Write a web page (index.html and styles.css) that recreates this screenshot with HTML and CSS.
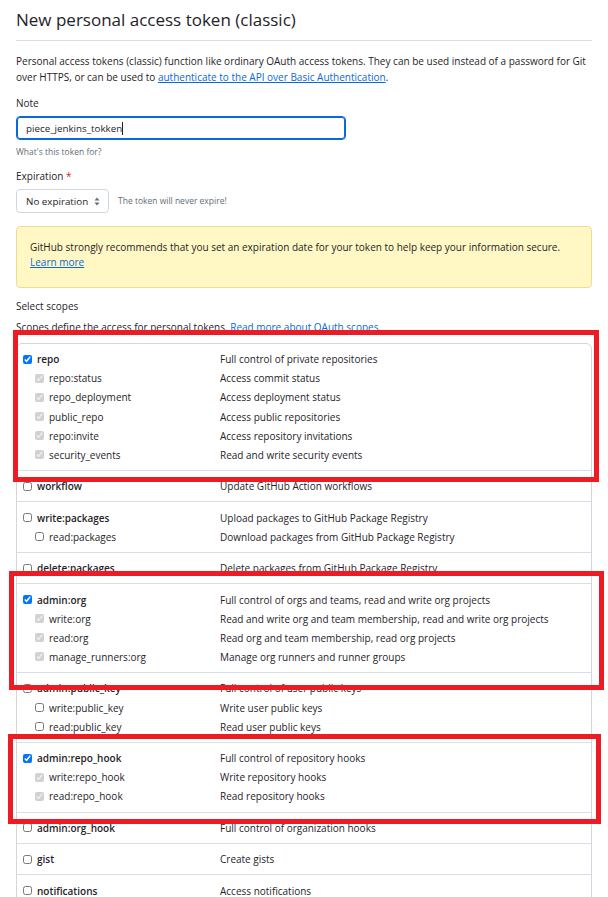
FILE: index.html
```html
<!DOCTYPE html>
<html lang="en">

<head>
    <meta charset="UTF-8">
    <meta name="viewport" content="width=device-width, initial-scale=1.0">
    <title>New personal access token (classic)</title>
    <link rel="stylesheet" href="styles.css">
</head>

<body>

    <div class="page">
        <h2 class="title">New personal access token (classic)</h2>
        <p class="intro">Personal access tokens (classic) function like ordinary OAuth access tokens. They can be used instead of a password for Git<br>over HTTPS, or can be used to <a href="#">authenticate to the API over Basic Authentication</a>.</p>

        <label class="field-label">Note</label>
        <div class="text-input">piece_jenkins_tokken<span class="caret"></span></div>
        <p class="hint">What's this token for?</p>

        <label class="field-label">Expiration <span class="required">*</span></label>
        <div class="select-row">
            <div class="select">
                No expiration
                <svg class="select-arrows" width="6" height="9" viewBox="0 0 6 9">
                    <path d="M3 0.5 L5.5 3.5 H0.5 Z M3 8.5 L5.5 5.5 H0.5 Z" fill="#656d76"/>
                </svg>
            </div>
            <span class="hint inline">The token will never expire!</span>
        </div>

        <div class="flash">
            GitHub strongly recommends that you set an expiration date for your token to help keep your information secure.<br>
            <a href="#">Learn more</a>
        </div>

        <label class="field-label">Select scopes</label>
        <p class="scopes-note">Scopes define the access for personal tokens. <a href="#">Read more about OAuth scopes.</a></p>

        <div class="scopes">
            <div class="scope-group">
                <div class="scope-row top"><span class="scope-name"><input type="checkbox" checked>repo</span><span>Full control of private repositories</span></div>
                <div class="scope-row sub"><span class="scope-name"><input type="checkbox" checked disabled>repo:status</span><span>Access commit status</span></div>
                <div class="scope-row sub"><span class="scope-name"><input type="checkbox" checked disabled>repo_deployment</span><span>Access deployment status</span></div>
                <div class="scope-row sub"><span class="scope-name"><input type="checkbox" checked disabled>public_repo</span><span>Access public repositories</span></div>
                <div class="scope-row sub"><span class="scope-name"><input type="checkbox" checked disabled>repo:invite</span><span>Access repository invitations</span></div>
                <div class="scope-row sub"><span class="scope-name"><input type="checkbox" checked disabled>security_events</span><span>Read and write security events</span></div>
            </div>
            <div class="scope-group">
                <div class="scope-row top"><span class="scope-name"><input type="checkbox">workflow</span><span>Update GitHub Action workflows</span></div>
            </div>
            <div class="scope-group">
                <div class="scope-row top"><span class="scope-name"><input type="checkbox">write:packages</span><span>Upload packages to GitHub Package Registry</span></div>
                <div class="scope-row sub"><span class="scope-name"><input type="checkbox">read:packages</span><span>Download packages from GitHub Package Registry</span></div>
            </div>
            <div class="scope-group">
                <div class="scope-row top"><span class="scope-name"><input type="checkbox">delete:packages</span><span>Delete packages from GitHub Package Registry</span></div>
            </div>
            <div class="scope-group">
                <div class="scope-row top"><span class="scope-name"><input type="checkbox" checked>admin:org</span><span>Full control of orgs and teams, read and write org projects</span></div>
                <div class="scope-row sub"><span class="scope-name"><input type="checkbox" checked disabled>write:org</span><span>Read and write org and team membership, read and write org projects</span></div>
                <div class="scope-row sub"><span class="scope-name"><input type="checkbox" checked disabled>read:org</span><span>Read org and team membership, read org projects</span></div>
                <div class="scope-row sub"><span class="scope-name"><input type="checkbox" checked disabled>manage_runners:org</span><span>Manage org runners and runner groups</span></div>
            </div>
            <div class="scope-group">
                <div class="scope-row top"><span class="scope-name"><input type="checkbox">admin:public_key</span><span>Full control of user public keys</span></div>
                <div class="scope-row sub"><span class="scope-name"><input type="checkbox">write:public_key</span><span>Write user public keys</span></div>
                <div class="scope-row sub"><span class="scope-name"><input type="checkbox">read:public_key</span><span>Read user public keys</span></div>
            </div>
            <div class="scope-group">
                <div class="scope-row top"><span class="scope-name"><input type="checkbox" checked>admin:repo_hook</span><span>Full control of repository hooks</span></div>
                <div class="scope-row sub"><span class="scope-name"><input type="checkbox" checked disabled>write:repo_hook</span><span>Write repository hooks</span></div>
                <div class="scope-row sub"><span class="scope-name"><input type="checkbox" checked disabled>read:repo_hook</span><span>Read repository hooks</span></div>
            </div>
            <div class="scope-group">
                <div class="scope-row top"><span class="scope-name"><input type="checkbox">admin:org_hook</span><span>Full control of organization hooks</span></div>
            </div>
            <div class="scope-group">
                <div class="scope-row top"><span class="scope-name"><input type="checkbox">gist</span><span>Create gists</span></div>
            </div>
            <div class="scope-group">
                <div class="scope-row top"><span class="scope-name"><input type="checkbox">notifications</span><span>Access notifications</span></div>
            </div>
        </div>

        <!-- red annotation boxes drawn over the screenshot -->
        <div class="mark mark-repo"></div>
        <div class="mark mark-org"></div>
        <div class="mark mark-hook"></div>
    </div>

</body>

</html>
```

FILE: styles.css
```css
body {
    margin: 0;
    font-family: "Open Sans", "Noto Sans", sans-serif;
    font-size: 10px;
    color: #1f2328;
    background-color: white;
    overflow: hidden;
}

a {
    color: #0969da;
    text-decoration: underline;
}

.page {
    position: relative;
    padding: 8px 16px 0;
}

.title {
    margin: 0;
    font-size: 17px;
    font-weight: 400;
    line-height: 24px;
    padding-bottom: 8px;
    border-bottom: 1px solid #d8dee4;
}

.intro {
    margin: 12px 0 0;
    line-height: 16px;
}

.field-label {
    display: block;
    margin-top: 10px;
    font-weight: 500;
    line-height: 16px;
}

.required {
    color: #cf222e;
}

.text-input {
    display: flex;
    align-items: center;
    box-sizing: border-box;
    width: 330px;
    height: 24px;
    margin-top: 5px;
    padding: 0 9px;
    font-size: 9.8px;
    border: 1px solid #0969da;
    box-shadow: inset 0 0 0 1px #0969da;
    border-radius: 4px;
}

.caret {
    display: inline-block;
    width: 0;
    height: 13px;
    border-left: 1px solid #1f2328;
}

.hint {
    margin: 6px 0 0;
    font-size: 8.5px;
    line-height: 12px;
    color: #656d76;
}

.hint.inline {
    margin: 0;
}

.select-row {
    display: flex;
    align-items: center;
    gap: 9px;
    margin-top: 5px;
}

.select {
    display: flex;
    align-items: center;
    justify-content: space-between;
    box-sizing: border-box;
    width: 93px;
    height: 24px;
    padding: 0 8px 0 9px;
    font-size: 9.8px;
    border: 1px solid #d0d7de;
    border-radius: 4px;
}

.flash {
    margin-top: 13px;
    padding: 13px 13px 17px;
    line-height: 15px;
    background-color: #fff8c5;
    border: 1px solid #eedb96;
    border-radius: 4px;
}

.scopes-note {
    margin: 5px 0 0;
    line-height: 16px;
}

.scopes {
    margin-top: 8px;
    border: 1px solid #d0d7de;
    border-radius: 6px;
}

.scope-group {
    padding: 5.7px 0;
}

.scope-group + .scope-group {
    border-top: 1px solid #d8dee4;
}

.scope-row {
    display: grid;
    grid-template-columns: 203px 1fr;
    align-items: center;
    height: 19.1px;
}

.scope-name {
    display: flex;
    align-items: center;
    gap: 5px;
    padding-left: 6px;
}

.scope-row.top .scope-name {
    font-weight: 600;
}

.scope-row.sub .scope-name {
    padding-left: 18px;
}

.scope-name input {
    width: 9px;
    height: 9px;
    margin: 0;
}

.mark {
    position: absolute;
    box-sizing: border-box;
    border: 5px solid #ed1c24;
}

.mark-repo {
    left: 13px;
    top: 330px;
    width: 586px;
    height: 152px;
}

.mark-org {
    left: 9px;
    top: 571px;
    width: 595px;
    height: 119px;
}

.mark-hook {
    left: 8px;
    top: 734px;
    width: 593px;
    height: 90px;
}
```
